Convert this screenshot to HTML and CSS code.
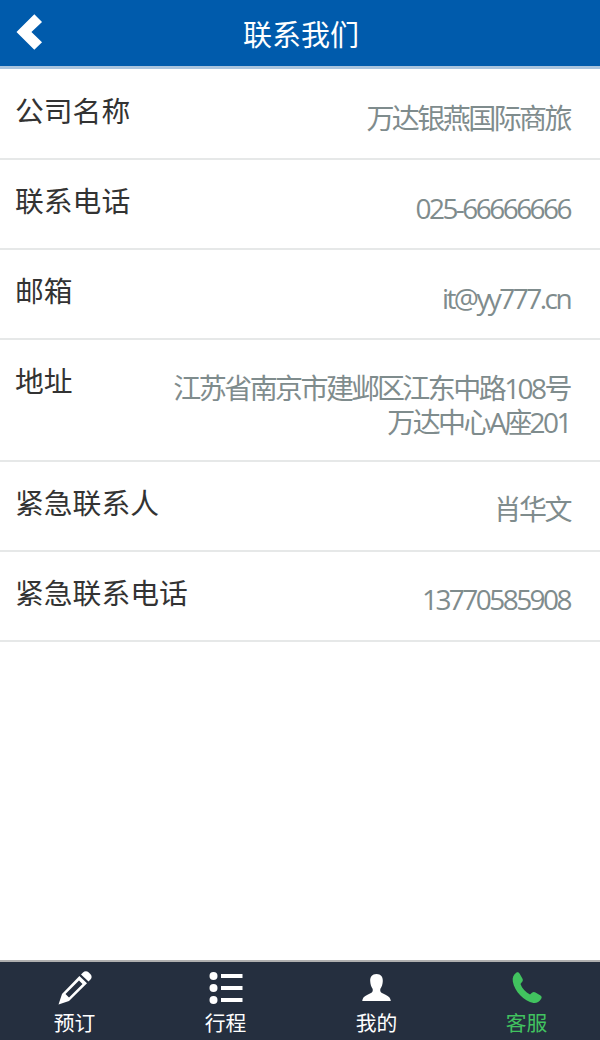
FILE: index.html
```html
<!DOCTYPE html>
<html>
  <head>
    <meta charset="UTF-8" />
    <title>联系我们</title>
    <link rel="stylesheet" href="styles.css">
  </head>
  <body>
    <div class="page">
      <div class="header">
        <svg class="back" viewBox="0 0 28 38"><path d="M19 0.500 L27 8.500 L16 19 L27 29.500 L19 37.500 L0.500 19 Z"/></svg>
        <h1>联系我们</h1>
      </div>
      <div class="list">
        <div class="row">
          <div class="label">公司名称</div>
          <div class="value">万达银燕国际商旅</div>
        </div>
        <div class="row">
          <div class="label">联系电话</div>
          <div class="value">025-66666666</div>
        </div>
        <div class="row">
          <div class="label">邮箱</div>
          <div class="value">it@yy777.cn</div>
        </div>
        <div class="row">
          <div class="label">地址</div>
          <div class="value">江苏省南京市建邺区江东中路108号<br>万达中心A座201</div>
        </div>
        <div class="row">
          <div class="label">紧急联系人</div>
          <div class="value">肖华文</div>
        </div>
        <div class="row">
          <div class="label">紧急联系电话</div>
          <div class="value">13770585908</div>
        </div>
      </div>
      <div class="tabbar">
        <div class="tab">
          <svg class="icon" viewBox="0 0 34 34"><path fill-rule="evenodd" d="M25 1.500 C26.500 0 29 0 30.500 1.200 L32.500 3.200 C34 4.800 34 7 32.500 8.600 L30.500 10.600 L23 3.500 Z M21.400 5 L29 12.200 L11 30 L0.500 33.500 L4 23 Z M21 9.500 L7.500 23 L11 26.500 L24.500 13 Z"/></svg>
          <span>预订</span>
        </div>
        <div class="tab">
          <svg class="icon" viewBox="0 0 34 34"><circle cx="4.500" cy="5" r="4"/><circle cx="4.500" cy="17" r="4"/><circle cx="4.500" cy="29" r="4"/><path d="M12 3h21.500v4H12zM12 15h21.500v4H12zM12 27h21.500v4H12z"/></svg>
          <span>行程</span>
        </div>
        <div class="tab">
          <svg class="icon" viewBox="0 0 34 34"><path d="M16.500 3 C21 3 23 6 22.800 10 C22.700 13 21.800 16 20.300 18 C20 20 20.500 21.500 23 22.500 C26.500 24 29.500 25.500 30.300 28 L30.800 30 H2.200 L2.700 28 C3.500 25.500 6.500 24 10 22.500 C12.500 21.500 13 20 12.700 18 C11.200 16 10.300 13 10.200 10 C10 6 12 3 16.500 3 Z"/></svg>
          <span>我的</span>
        </div>
        <div class="tab active">
          <svg class="icon" viewBox="0 0 34 34"><path d="M6.500 1.500 C8 0.800 9 1.500 9.700 2.700 L12.500 7.800 C13.200 9.200 12.800 10.300 11.800 11.300 L10.500 13 C12 17.500 15.500 21 20 23.500 L22 21.800 C23 20.800 24.300 20.700 25.500 21.500 L30.500 24.500 C31.800 25.300 32 26.500 31.200 27.700 C29 31 26.500 32.500 23.500 32 C14 30 4.500 20.500 2.800 10.500 C2.200 6.500 3.500 3.500 6.500 1.500 Z"/></svg>
          <span>客服</span>
        </div>
      </div>
    </div>
  </body>
</html>
```

FILE: styles.css
```css
body {
  margin: 0;
  padding: 0;
  background-color: #fff;
  font-family: "Open Sans", "Noto Sans CJK SC", sans-serif;
}
.page {
  display: flex;
  flex-direction: column;
  height: 1040px;
  overflow: hidden;
}
.header {
  display: flex;
  align-items: center;
  justify-content: center;
  position: relative;
  height: 66px;
  padding-left: 2px;
  background-color: #005bac;
  border-bottom: 3px solid #a9c4de;
}
.header h1 {
  margin: 0;
  font-size: 29px;
  font-weight: normal;
  color: #fff;
}
.back {
  position: absolute;
  left: 16px;
  top: 13px;
  width: 27px;
  height: 38px;
  fill: #fff;
}
.list {
  flex: 1;
  margin-top: 1px;
}
.row {
  display: flex;
  justify-content: space-between;
  align-items: flex-start;
  padding: 21px 30px 21px 15px;
  border-bottom: 2px solid #e6e8e8;
}
.label {
  margin-bottom: 6px;
  font-size: 28.8px;
  line-height: 40px;
  color: #333;
  white-space: nowrap;
}
.value {
  margin-top: 9.5px;
  font-size: 28px;
  line-height: 34px;
  letter-spacing: -2.55px;
  color: #7f8c8d;
  text-align: right;
}
.tabbar {
  display: grid;
  grid-template-columns: 151px 151px 151px 149px;
  margin-left: -1px;
  height: 78px;
  background-color: #252f3f;
  border-top: 2px solid #b0b0b0;
}
.tab {
  display: flex;
  flex-direction: column;
  align-items: center;
  color: #fff;
  font-size: 20.8px;
  line-height: 30px;
}
.tab.active {
  color: #41c35f;
}
.icon {
  width: 34px;
  height: 34px;
  margin-top: 9px;
  margin-bottom: 3px;
  fill: currentColor;
}
```
